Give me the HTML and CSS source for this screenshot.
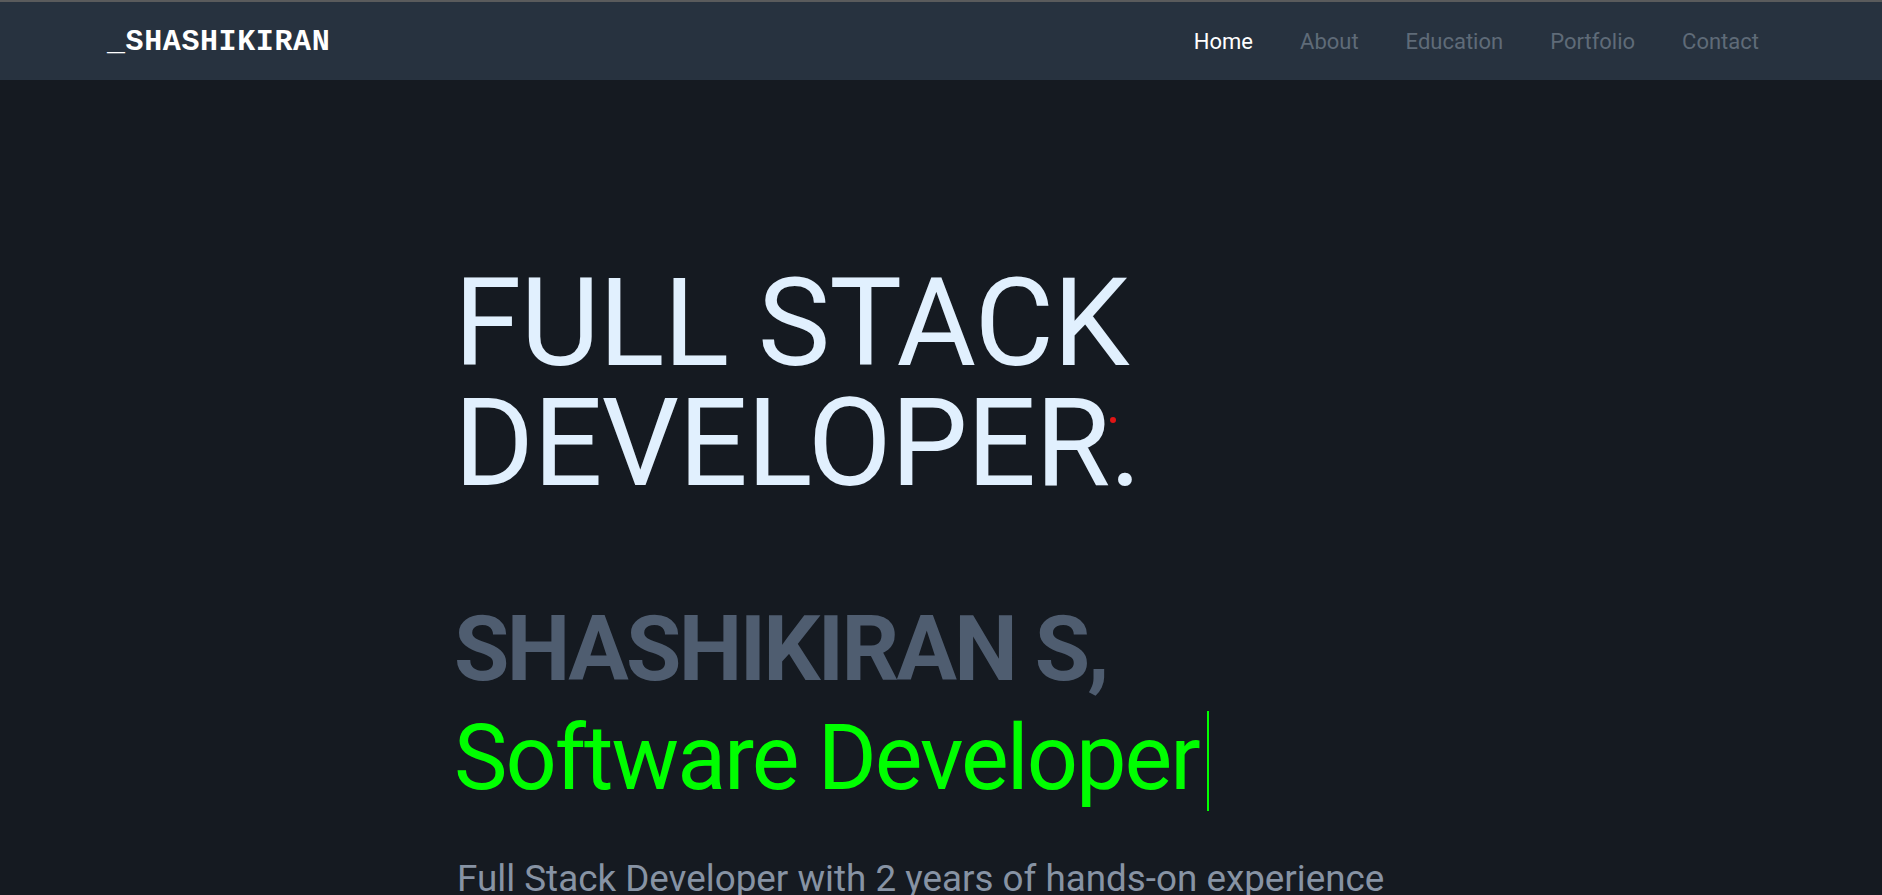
FILE: index.html
```html
<!DOCTYPE html>
<html lang="en">
<head>
<meta charset="utf-8">
<title>Shashikiran</title>
<link rel="stylesheet" href="styles.css">
</head>
<body>
<header class="topbar">
  <a class="logo" href="#">_SHASHIKIRAN</a>
  <nav class="menu">
    <a class="menu-link active" href="#">Home</a>
    <a class="menu-link" href="#">About</a>
    <a class="menu-link" href="#">Education</a>
    <a class="menu-link" href="#">Portfolio</a>
    <a class="menu-link" href="#">Contact</a>
  </nav>
</header>
<main class="hero">
  <div class="hero-inner">
    <h1 class="hero-title">FULL STACK<br>DEVELOPER.</h1>
    <h2 class="hero-name">SHASHIKIRAN S,</h2>
    <div class="hero-role"><span class="role-text">Software Developer</span><span class="caret"></span></div>
    <p class="hero-desc">Full Stack Developer with 2 years of hands-on experience</p>
  </div>
  <span class="cursor-dot"></span>
</main>
</body>
</html>
```
FILE: styles.css
```css
* { box-sizing: border-box; }
html, body { margin: 0; padding: 0; }
body {
  background: #151a21;
  font-family: Roboto, "Liberation Sans", sans-serif;
  height: 895px;
  overflow: hidden;
  border-top: 2px solid #5a5b5c;
}
.topbar {
  height: 78px;
  background: #27323f;
  display: flex;
  align-items: center;
  justify-content: space-between;
  padding: 0 123px 0 107px;
}
.logo {
  font-family: "Liberation Mono", "Courier New", monospace;
  font-weight: bold;
  font-size: 30px;
  color: #ffffff;
  text-decoration: none;
  letter-spacing: 0.6px;
  margin-top: 2px;
}
.menu {
  display: flex;
  gap: 47px;
}
.menu-link {
  font-size: 22px;
  color: #5f6b78;
  text-decoration: none;
}
.menu-link.active { color: #ffffff; }
.hero {
  position: relative;
  height: 815px;
}
.hero-inner {
  width: 974px;
  margin: 0 auto;
  padding-top: 184px;
}
.hero-title {
  margin: 0;
  font-weight: 400;
  font-size: 122px;
  line-height: 120px;
  letter-spacing: -0.9px;
  color: #e1f0fe;
}
.hero-name {
  margin: 96px 0 0;
  font-weight: 700;
  font-size: 90px;
  line-height: 100px;
  letter-spacing: -2.7px;
  color: #4f5d70;
}
.hero-role {
  display: flex;
  align-items: center;
  margin-top: 4px;
  height: 110px;
}
.role-text {
  font-size: 90px;
  line-height: 110px;
  letter-spacing: -2px;
  color: #00ff00;
}
.caret {
  width: 2px;
  height: 100px;
  background: #00ff00;
  margin: 4px 0 0 8px;
}
.hero-desc {
  margin: 43px 0 0 3px;
  font-size: 36.8px;
  color: #8793a4;
}
.cursor-dot {
  position: absolute;
  left: 1110px;
  top: 337px;
  width: 6px;
  height: 6px;
  border-radius: 50%;
  background: #e01515;
}
```
